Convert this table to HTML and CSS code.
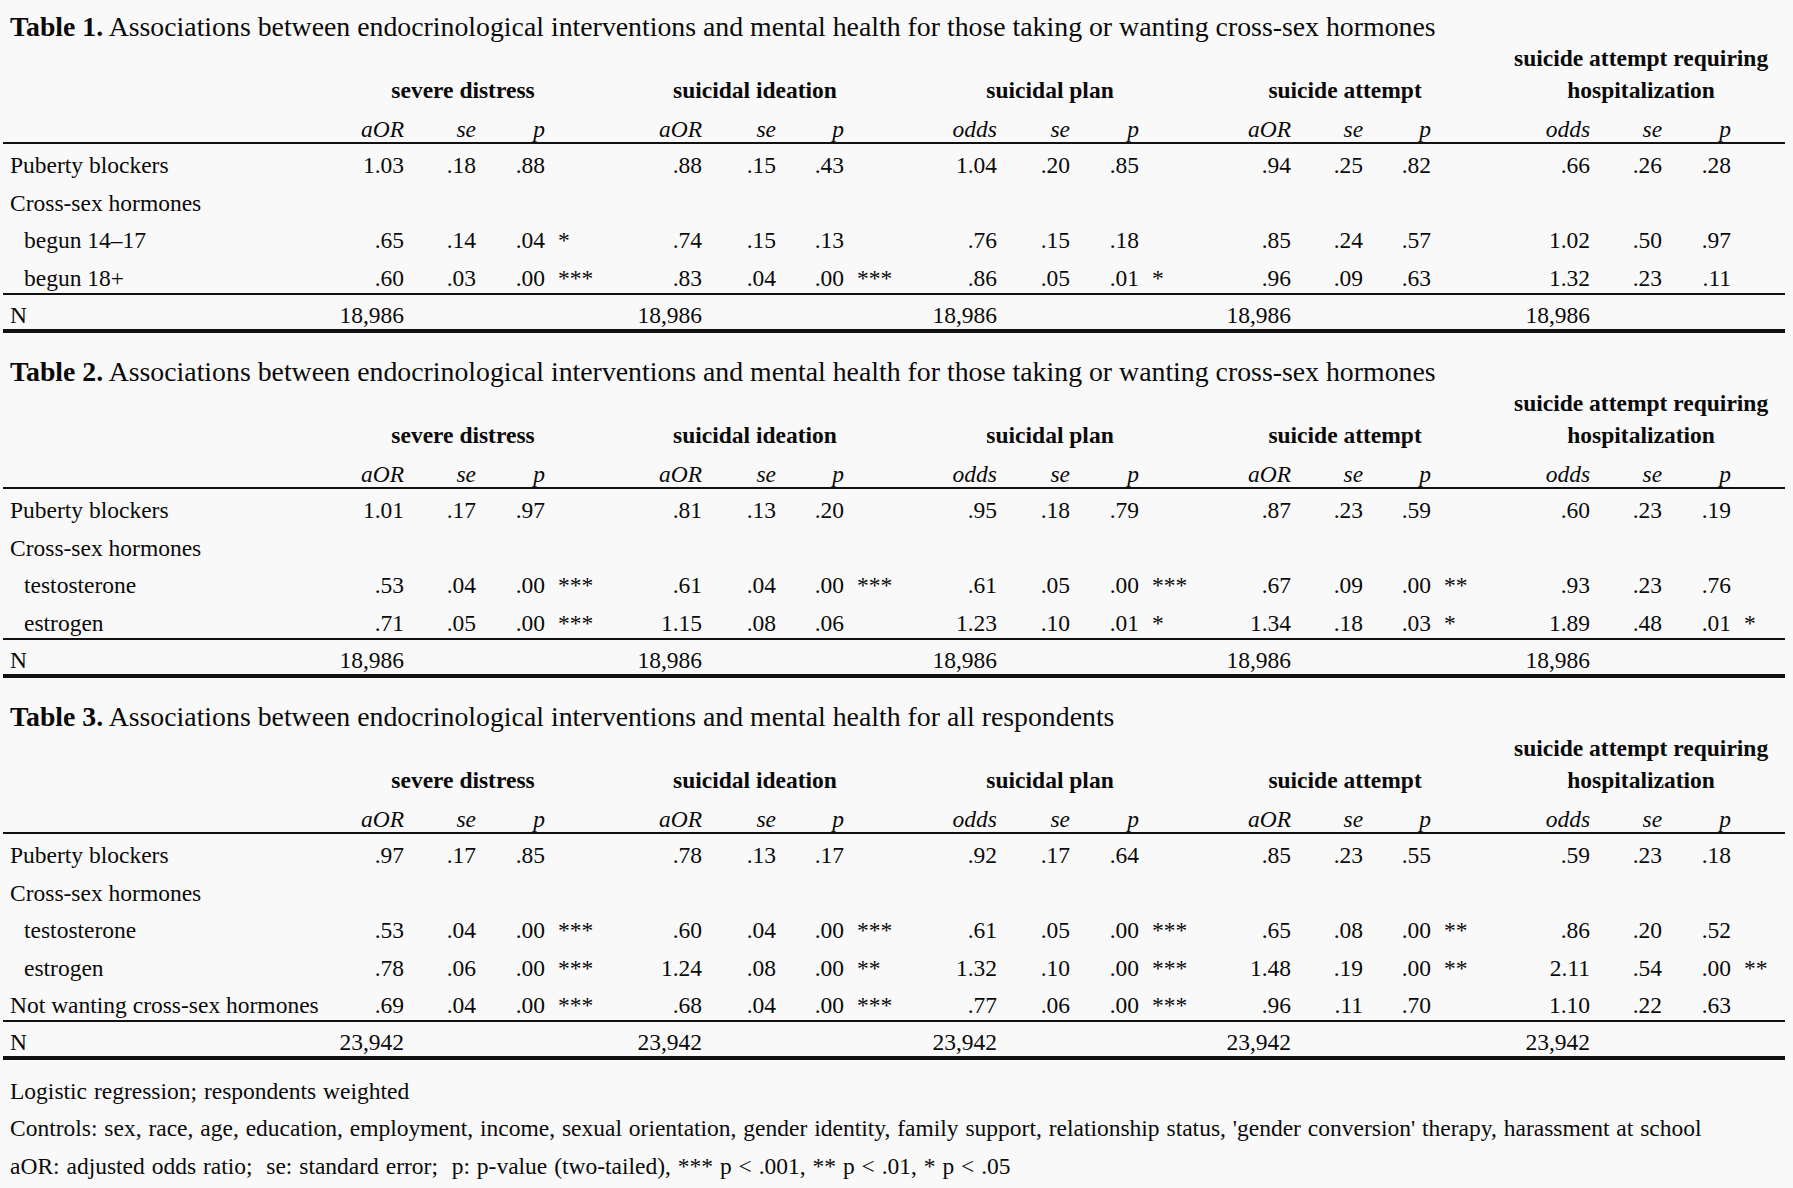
FILE: index.html
```html
<!DOCTYPE html>
<html lang="en">
<head>
  <meta charset="UTF-8">
  <meta name="viewport" content="width=device-width, initial-scale=1.0">
  <title>Endocrinological interventions and mental health</title>
  <link rel="stylesheet" href="styles.css">
</head>
<body>
  <!-- Table 1 -->
  <section class="table-block">
    <div class="table-title"><b>Table 1.</b> Associations between endocrinological interventions and mental health for those taking or wanting cross-sex hormones</div>
    <table class="stats">
      <colgroup>
        <col class="c-label">
        <col class="g1-est"><col class="c-se"><col class="c-p"><col class="g1-sig">
        <col class="g2-est"><col class="g2-se"><col class="g2-p"><col class="g2-sig">
        <col class="g3-est"><col class="g3-se"><col class="c-p"><col class="g3-sig">
        <col class="g4-est"><col class="c-se"><col class="g2-p"><col class="g4-sig">
        <col class="g5-est"><col class="c-se"><col class="c-p"><col class="g3-sig">
      </colgroup>
      <thead>
        <tr class="groups">
          <th></th>
          <th colspan="4">severe distress</th>
          <th colspan="4">suicidal ideation</th>
          <th colspan="4">suicidal plan</th>
          <th colspan="4">suicide attempt</th>
          <th colspan="4">suicide attempt requiring<br>hospitalization</th>
        </tr>
        <tr class="labels">
          <th></th>
          <th>aOR</th><th>se</th><th>p</th><th></th>
          <th>aOR</th><th>se</th><th>p</th><th></th>
          <th>odds</th><th>se</th><th>p</th><th></th>
          <th>aOR</th><th>se</th><th>p</th><th></th>
          <th>odds</th><th>se</th><th>p</th><th></th>
        </tr>
      </thead>
      <tbody>
        <tr>
          <td class="label">Puberty blockers</td>
          <td>1.03</td><td>.18</td><td>.88</td><td class="sig"></td>
          <td>.88</td><td>.15</td><td>.43</td><td class="sig"></td>
          <td>1.04</td><td>.20</td><td>.85</td><td class="sig"></td>
          <td>.94</td><td>.25</td><td>.82</td><td class="sig"></td>
          <td>.66</td><td>.26</td><td>.28</td><td class="sig"></td>
        </tr>
        <tr>
          <td class="label">Cross-sex hormones</td>
          <td colspan="20"></td>
        </tr>
        <tr>
          <td class="label sub">begun 14–17</td>
          <td>.65</td><td>.14</td><td>.04</td><td class="sig">*</td>
          <td>.74</td><td>.15</td><td>.13</td><td class="sig"></td>
          <td>.76</td><td>.15</td><td>.18</td><td class="sig"></td>
          <td>.85</td><td>.24</td><td>.57</td><td class="sig"></td>
          <td>1.02</td><td>.50</td><td>.97</td><td class="sig"></td>
        </tr>
        <tr>
          <td class="label sub">begun 18+</td>
          <td>.60</td><td>.03</td><td>.00</td><td class="sig">***</td>
          <td>.83</td><td>.04</td><td>.00</td><td class="sig">***</td>
          <td>.86</td><td>.05</td><td>.01</td><td class="sig">*</td>
          <td>.96</td><td>.09</td><td>.63</td><td class="sig"></td>
          <td>1.32</td><td>.23</td><td>.11</td><td class="sig"></td>
        </tr>
      </tbody>
      <tfoot>
        <tr>
          <td class="label">N</td>
          <td>18,986</td><td colspan="3"></td>
          <td>18,986</td><td colspan="3"></td>
          <td>18,986</td><td colspan="3"></td>
          <td>18,986</td><td colspan="3"></td>
          <td>18,986</td><td colspan="3"></td>
        </tr>
      </tfoot>
    </table>
  </section>

  <!-- Table 2 -->
  <section class="table-block">
    <div class="table-title"><b>Table 2.</b> Associations between endocrinological interventions and mental health for those taking or wanting cross-sex hormones</div>
    <table class="stats">
      <colgroup>
        <col class="c-label">
        <col class="g1-est"><col class="c-se"><col class="c-p"><col class="g1-sig">
        <col class="g2-est"><col class="g2-se"><col class="g2-p"><col class="g2-sig">
        <col class="g3-est"><col class="g3-se"><col class="c-p"><col class="g3-sig">
        <col class="g4-est"><col class="c-se"><col class="g2-p"><col class="g4-sig">
        <col class="g5-est"><col class="c-se"><col class="c-p"><col class="g3-sig">
      </colgroup>
      <thead>
        <tr class="groups">
          <th></th>
          <th colspan="4">severe distress</th>
          <th colspan="4">suicidal ideation</th>
          <th colspan="4">suicidal plan</th>
          <th colspan="4">suicide attempt</th>
          <th colspan="4">suicide attempt requiring<br>hospitalization</th>
        </tr>
        <tr class="labels">
          <th></th>
          <th>aOR</th><th>se</th><th>p</th><th></th>
          <th>aOR</th><th>se</th><th>p</th><th></th>
          <th>odds</th><th>se</th><th>p</th><th></th>
          <th>aOR</th><th>se</th><th>p</th><th></th>
          <th>odds</th><th>se</th><th>p</th><th></th>
        </tr>
      </thead>
      <tbody>
        <tr>
          <td class="label">Puberty blockers</td>
          <td>1.01</td><td>.17</td><td>.97</td><td class="sig"></td>
          <td>.81</td><td>.13</td><td>.20</td><td class="sig"></td>
          <td>.95</td><td>.18</td><td>.79</td><td class="sig"></td>
          <td>.87</td><td>.23</td><td>.59</td><td class="sig"></td>
          <td>.60</td><td>.23</td><td>.19</td><td class="sig"></td>
        </tr>
        <tr>
          <td class="label">Cross-sex hormones</td>
          <td colspan="20"></td>
        </tr>
        <tr>
          <td class="label sub">testosterone</td>
          <td>.53</td><td>.04</td><td>.00</td><td class="sig">***</td>
          <td>.61</td><td>.04</td><td>.00</td><td class="sig">***</td>
          <td>.61</td><td>.05</td><td>.00</td><td class="sig">***</td>
          <td>.67</td><td>.09</td><td>.00</td><td class="sig">**</td>
          <td>.93</td><td>.23</td><td>.76</td><td class="sig"></td>
        </tr>
        <tr>
          <td class="label sub">estrogen</td>
          <td>.71</td><td>.05</td><td>.00</td><td class="sig">***</td>
          <td>1.15</td><td>.08</td><td>.06</td><td class="sig"></td>
          <td>1.23</td><td>.10</td><td>.01</td><td class="sig">*</td>
          <td>1.34</td><td>.18</td><td>.03</td><td class="sig">*</td>
          <td>1.89</td><td>.48</td><td>.01</td><td class="sig">*</td>
        </tr>
      </tbody>
      <tfoot>
        <tr>
          <td class="label">N</td>
          <td>18,986</td><td colspan="3"></td>
          <td>18,986</td><td colspan="3"></td>
          <td>18,986</td><td colspan="3"></td>
          <td>18,986</td><td colspan="3"></td>
          <td>18,986</td><td colspan="3"></td>
        </tr>
      </tfoot>
    </table>
  </section>

  <!-- Table 3 -->
  <section class="table-block">
    <div class="table-title"><b>Table 3.</b> Associations between endocrinological interventions and mental health for all respondents</div>
    <table class="stats">
      <colgroup>
        <col class="c-label">
        <col class="g1-est"><col class="c-se"><col class="c-p"><col class="g1-sig">
        <col class="g2-est"><col class="g2-se"><col class="g2-p"><col class="g2-sig">
        <col class="g3-est"><col class="g3-se"><col class="c-p"><col class="g3-sig">
        <col class="g4-est"><col class="c-se"><col class="g2-p"><col class="g4-sig">
        <col class="g5-est"><col class="c-se"><col class="c-p"><col class="g3-sig">
      </colgroup>
      <thead>
        <tr class="groups">
          <th></th>
          <th colspan="4">severe distress</th>
          <th colspan="4">suicidal ideation</th>
          <th colspan="4">suicidal plan</th>
          <th colspan="4">suicide attempt</th>
          <th colspan="4">suicide attempt requiring<br>hospitalization</th>
        </tr>
        <tr class="labels">
          <th></th>
          <th>aOR</th><th>se</th><th>p</th><th></th>
          <th>aOR</th><th>se</th><th>p</th><th></th>
          <th>odds</th><th>se</th><th>p</th><th></th>
          <th>aOR</th><th>se</th><th>p</th><th></th>
          <th>odds</th><th>se</th><th>p</th><th></th>
        </tr>
      </thead>
      <tbody>
        <tr>
          <td class="label">Puberty blockers</td>
          <td>.97</td><td>.17</td><td>.85</td><td class="sig"></td>
          <td>.78</td><td>.13</td><td>.17</td><td class="sig"></td>
          <td>.92</td><td>.17</td><td>.64</td><td class="sig"></td>
          <td>.85</td><td>.23</td><td>.55</td><td class="sig"></td>
          <td>.59</td><td>.23</td><td>.18</td><td class="sig"></td>
        </tr>
        <tr>
          <td class="label">Cross-sex hormones</td>
          <td colspan="20"></td>
        </tr>
        <tr>
          <td class="label sub">testosterone</td>
          <td>.53</td><td>.04</td><td>.00</td><td class="sig">***</td>
          <td>.60</td><td>.04</td><td>.00</td><td class="sig">***</td>
          <td>.61</td><td>.05</td><td>.00</td><td class="sig">***</td>
          <td>.65</td><td>.08</td><td>.00</td><td class="sig">**</td>
          <td>.86</td><td>.20</td><td>.52</td><td class="sig"></td>
        </tr>
        <tr>
          <td class="label sub">estrogen</td>
          <td>.78</td><td>.06</td><td>.00</td><td class="sig">***</td>
          <td>1.24</td><td>.08</td><td>.00</td><td class="sig">**</td>
          <td>1.32</td><td>.10</td><td>.00</td><td class="sig">***</td>
          <td>1.48</td><td>.19</td><td>.00</td><td class="sig">**</td>
          <td>2.11</td><td>.54</td><td>.00</td><td class="sig">**</td>
        </tr>
        <tr>
          <td class="label">Not wanting cross-sex hormones</td>
          <td>.69</td><td>.04</td><td>.00</td><td class="sig">***</td>
          <td>.68</td><td>.04</td><td>.00</td><td class="sig">***</td>
          <td>.77</td><td>.06</td><td>.00</td><td class="sig">***</td>
          <td>.96</td><td>.11</td><td>.70</td><td class="sig"></td>
          <td>1.10</td><td>.22</td><td>.63</td><td class="sig"></td>
        </tr>
      </tbody>
      <tfoot>
        <tr>
          <td class="label">N</td>
          <td>23,942</td><td colspan="3"></td>
          <td>23,942</td><td colspan="3"></td>
          <td>23,942</td><td colspan="3"></td>
          <td>23,942</td><td colspan="3"></td>
          <td>23,942</td><td colspan="3"></td>
        </tr>
      </tfoot>
    </table>
  </section>

  <div class="notes">
    <p>Logistic regression; respondents weighted</p>
    <p>Controls: sex, race, age, education, employment, income, sexual orientation, gender identity, family support, relationship status, 'gender conversion' therapy, harassment at school</p>
    <p>aOR: adjusted odds ratio;&nbsp; se: standard error;&nbsp; p: p-value (two-tailed), *** p &lt; .001, ** p &lt; .01, * p &lt; .05</p>
  </div>
</body>
</html>
```

FILE: styles.css
```css
html,
body {
  margin: 0;
  background: #f9f9f9;
}

body {
  padding: 12px 8px 0 3px;
  font-family: "Liberation Serif", "Times New Roman", serif;
  font-size: 23.5px;
  color: #0a0a0a;
}

.table-block + .table-block {
  margin-top: 24.5px;
}

.table-title {
  font-size: 27.8px;
  line-height: 30px;
  padding-left: 7px;
  white-space: nowrap;
}

.stats {
  width: 1782px;
  table-layout: fixed;
  border-collapse: separate;
  border-spacing: 0;
}

.stats th,
.stats td {
  padding: 0;
  white-space: nowrap;
}

/* column widths: number columns are right aligned, so their right edges matter */
.stats .c-label { width: 320px; }
.stats .c-se { width: 72px; }
.stats .c-p { width: 69px; }
.stats .g1-est { width: 81px; }
.stats .g1-sig { width: 58px; }
.stats .g2-est { width: 99px; }
.stats .g2-se { width: 74px; }
.stats .g2-p { width: 68px; }
.stats .g2-sig { width: 63px; }
.stats .g3-est { width: 90px; }
.stats .g3-se { width: 73px; }
.stats .g3-sig { width: 54px; }
.stats .g4-est { width: 98px; }
.stats .g4-sig { width: 66px; }
.stats .g5-est { width: 93px; }

.stats .groups th {
  line-height: 32px;
  font-weight: bold;
  text-align: center;
  vertical-align: bottom;
}

.stats .labels th {
  padding-top: 10px;
  line-height: 26px;
  font-weight: normal;
  font-style: italic;
  text-align: right;
  vertical-align: bottom;
  border-bottom: 2px solid #111;
}

.stats tbody td {
  padding: 6px 0 1.5px;
  line-height: 30px;
  text-align: right;
}

.stats tbody tr:last-child td {
  padding-bottom: 0;
  border-bottom: 2px solid #111;
}

.stats tfoot td {
  padding-top: 7px;
  line-height: 27px;
  text-align: right;
  border-bottom: 4px solid #111;
}

.stats td.label {
  padding-left: 7px;
  text-align: left;
}

.stats td.sub {
  padding-left: 21px;
}

.stats td.sig {
  padding-left: 13px;
  text-align: left;
}

.notes {
  margin-top: 12.5px;
  padding-left: 7px;
  word-spacing: 1px;
}

.notes p {
  margin: 0;
  line-height: 37.5px;
  white-space: nowrap;
}
```
